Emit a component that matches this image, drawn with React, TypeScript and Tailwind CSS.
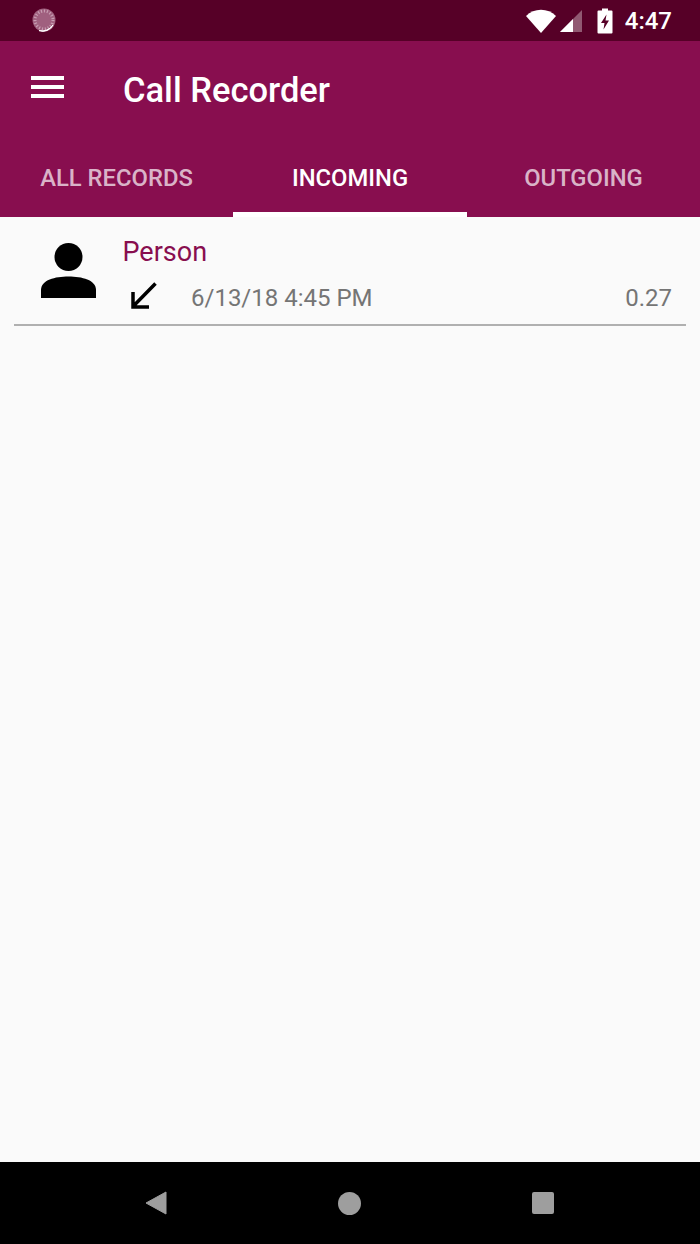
const TABS = [
  { label: "ALL RECORDS", active: false },
  { label: "INCOMING", active: true },
  { label: "OUTGOING", active: false },
];

function StatusBar() {
  return (
    <div className="flex h-[41px] shrink-0 items-center justify-between bg-[#560027] pl-[32px] pr-[28px]">
      {/* spinner notification icon */}
      <svg width="26" height="26" viewBox="0 0 26 26" className="mt-[1px]">
        <circle cx="12" cy="12" r="11.5" fill="#a0607f" />
        <circle cx="12" cy="12" r="9" fill="none" stroke="#c79db2" strokeWidth="3" strokeDasharray="1.2 1.8" />
        <path d="M21 17 A11.5 11.5 0 0 1 7 22.6 A13 13 0 0 0 21 17 Z" fill="#fff" stroke="#fff" strokeWidth="1" />
      </svg>
      <div className="flex items-center text-white">
        <svg width="30" height="24" viewBox="0 0 30 24">
          <path d="M0 7 C8 -1.5 22 -1.5 30 7 L15 24 Z" fill="#fff" />
        </svg>
        <svg width="24" height="24" viewBox="0 0 24 24" className="ml-[3px]">
          <path d="M23 1 L23 23 L1 23 Z" fill="#fff" fillOpacity="0.35" />
          <path d="M14 10 L14 23 L1 23 Z" fill="#fff" />
        </svg>
        <svg width="16" height="26" viewBox="0 0 16 26" className="ml-[14px]">
          <path
            fillRule="evenodd"
            d="M5 0.5 H11 V2.5 H14.5 A1 1 0 0 1 15.5 3.5 V24.5 A1 1 0 0 1 14.5 25.5 H1.5 A1 1 0 0 1 0.5 24.5 V3.5 A1 1 0 0 1 1.5 2.5 H5 Z M9.5 6.5 L4 15 H7.5 L6.5 21.5 L12 12.5 H8.5 Z"
            fill="#fff"
          />
        </svg>
        <span className="ml-[12px] text-[24px] font-medium leading-none">4:47</span>
      </div>
    </div>
  );
}

function AppBar() {
  return (
    <div className="shrink-0 bg-[#880e4f] text-white">
      <div className="flex h-[96px] items-center">
        <div className="mb-[4px] ml-[31px] flex w-[33px] flex-col gap-[5px]">
          <div className="h-[4px] bg-white" />
          <div className="h-[4px] bg-white" />
          <div className="h-[4px] bg-white" />
        </div>
        <h1 className="ml-[59px] mt-[2px] text-[34.5px] font-medium leading-none">Call Recorder</h1>
      </div>
      <div className="flex h-[80px]">
        {TABS.map((tab) => (
          <div
            key={tab.label}
            className={
              tab.active
                ? "flex w-[234px] items-center justify-center border-b-[5px] border-white pt-[9px] text-[23.8px] font-medium text-white"
                : "flex w-[233px] items-center justify-center border-b-[5px] border-transparent pt-[9px] text-[23.8px] font-medium text-white/70"
            }
          >
            {tab.label}
          </div>
        ))}
      </div>
    </div>
  );
}

function RecordRow() {
  return (
    <div className="mx-[14px] flex h-[109px] border-b-2 border-[#b0b0b0]">
      <svg width="56" height="56" viewBox="0 0 56 56" className="ml-[27px] mt-[26px] shrink-0">
        <circle cx="27.5" cy="14" r="14" fill="#000" />
        <path d="M0 55 V47 C0 37 14 33.5 27.5 33.5 C41 33.5 55 37 55 47 V55 Z" fill="#000" />
      </svg>
      <div className="ml-[26px] flex min-w-0 flex-1 flex-col">
        <span className="-ml-[0.5px] mt-[19px] text-[27px] leading-[32px] text-[#880e4f]">Person</span>
        <div className="mt-[12px] flex items-start">
          <svg width="28" height="28" viewBox="0 0 28 28" className="ml-[7px] mt-[2px] shrink-0">
            <path d="M25.5 1.5 L3 24.5 M3 10 V25 H19" fill="none" stroke="#000" strokeWidth="3.5" />
          </svg>
          <span className="ml-[33px] text-[24px] leading-[36px] text-[#757575]">6/13/18 4:45 PM</span>
          <span className="ml-auto pr-[14px] text-[24px] leading-[36px] text-[#757575]">0.27</span>
        </div>
      </div>
    </div>
  );
}

function NavBar() {
  return (
    <div className="flex h-[82px] shrink-0 items-center bg-black">
      <svg width="24" height="24" viewBox="0 0 24 24" className="ml-[144px]">
        <path d="M2 12 L22 1 V23 Z" fill="#9e9e9e" stroke="#9e9e9e" strokeLinejoin="round" strokeWidth="1" />
      </svg>
      <div className="ml-[170px] h-[23px] w-[23px] rounded-full bg-[#9e9e9e]" />
      <div className="ml-[171px] h-[22px] w-[22px] rounded-[2px] bg-[#9e9e9e]" />
    </div>
  );
}

export default function App() {
  return (
    <div className="flex h-[1244px] w-[700px] flex-col overflow-hidden bg-[#fafafa] font-['Roboto',sans-serif]">
      <StatusBar />
      <AppBar />
      <div className="flex-1">
        <RecordRow />
      </div>
      <NavBar />
    </div>
  );
}
